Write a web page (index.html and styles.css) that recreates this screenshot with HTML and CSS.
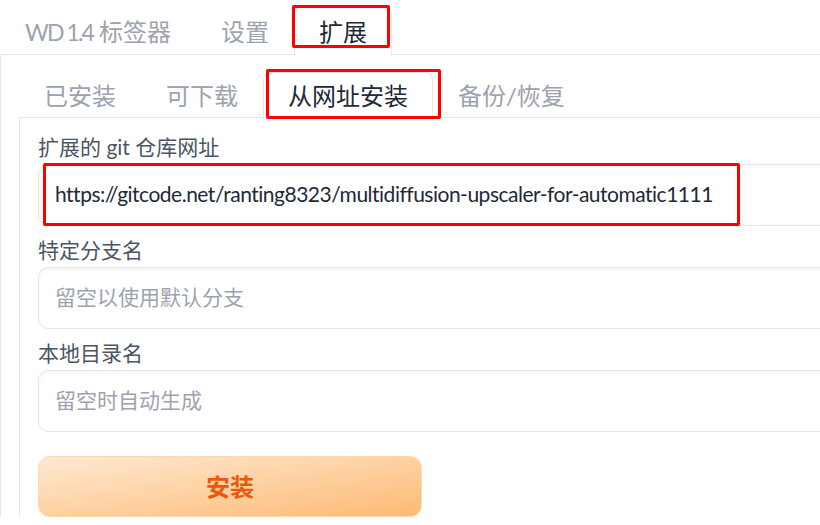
FILE: index.html
```html
<!DOCTYPE html>
<html>
	<head>
		<meta charset="UTF-8">
		<title>扩展</title>
		<link rel="stylesheet" href="styles.css">
	</head>
	<body>
		<div class="app">
			<div class="nav top">
				<button class="tab"><span class="latin">WD 1.4</span> 标签器</button>
				<button class="tab">设置</button>
				<button class="tab on">扩展</button>
			</div>
			<div class="panel">
				<div class="nav sub">
					<button class="tab">已安装</button>
					<button class="tab">可下载</button>
					<button class="tab on">从网址安装</button>
					<button class="tab">备份/恢复</button>
				</div>
				<div class="panel inner">
					<div class="field">
						<label>扩展的 git 仓库网址</label>
						<input type="text" class="box url" value="https://gitcode.net/ranting8323/multidiffusion-upscaler-for-automatic1111" />
					</div>
					<div class="field">
						<label>特定分支名</label>
						<input type="text" class="box" placeholder="留空以使用默认分支" />
					</div>
					<div class="field">
						<label>本地目录名</label>
						<input type="text" class="box" placeholder="留空时自动生成" />
					</div>
					<button class="install">安装</button>
				</div>
			</div>

			<!-- 标注框 -->
			<div class="mark m1"></div>
			<div class="mark m2"></div>
			<div class="mark m3"></div>
		</div>
	</body>
</html>
```

FILE: styles.css
```css
body{
	margin: 0;
	background: #fff;
	font-family: "Lato", "Noto Sans CJK SC", sans-serif;
}
.app{
	position: relative;
	width: 820px;
	height: 525px;
	overflow: hidden;
}
.nav{
	display: flex;
	border-bottom: 1px solid #e5e7eb;
}
.nav.top{
	padding-top: 7px;
}
.tab{
	font-family: inherit;
	font-size: 24px;
	color: #9ca3af;
	background: none;
	border: 1px solid transparent;
	border-bottom: none;
	margin-bottom: -1px;
	padding: 0 24px 2px;
	height: 48px;
	border-radius: 8px 8px 0 0;
	white-space: nowrap;
}
.latin{
	font-size: 23px;
	letter-spacing: -1.9px;
}
.sub .tab{
	height: 46px;
}
.tab.on{
	color: #1f2937;
	background: #fff;
	border-color: #e5e7eb;
}
.panel{
	border-left: 1px solid #e5e7eb;
	padding: 17px 0 0 18px;
}
.panel.inner{
	padding: 16px 0 0 18px;
}
.field{
	margin-bottom: 11px;
}
.field label{
	display: block;
	font-size: 21px;
	line-height: 26px;
	color: #4b5563;
	margin-bottom: 4px;
}
.box{
	display: block;
	box-sizing: border-box;
	width: 820px;
	height: 62px;
	padding: 0 16px 3px;
	font-family: inherit;
	font-size: 21px;
	color: #1f2937;
	border: 1px solid #e5e7eb;
	border-radius: 10px;
	box-shadow: inset 0 2px 4px rgba(0,0,0,.04);
	outline: none;
}
.url{
	letter-spacing: -0.5px;
}
.box::placeholder{
	color: #9ca3af;
	letter-spacing: 0;
}
.install{
	display: block;
	margin-top: 24px;
	width: 384px;
	height: 61px;
	padding-bottom: 3px;
	font-family: inherit;
	font-size: 24px;
	font-weight: bold;
	color: #ea580c;
	border: 1px solid #fed7aa;
	border-radius: 12px;
	background: linear-gradient(to bottom right, #ffe9d2, #fdba74);
}
.mark{
	position: absolute;
	border: 3px solid #ff0000;
	border-radius: 2px;
	box-sizing: border-box;
}
.m1{ left: 292px; top: 5px; width: 98px; height: 43px; }
.m2{ left: 266px; top: 69px; width: 175px; height: 50px; }
.m3{ left: 43px; top: 163px; width: 697px; height: 63px; }
```
